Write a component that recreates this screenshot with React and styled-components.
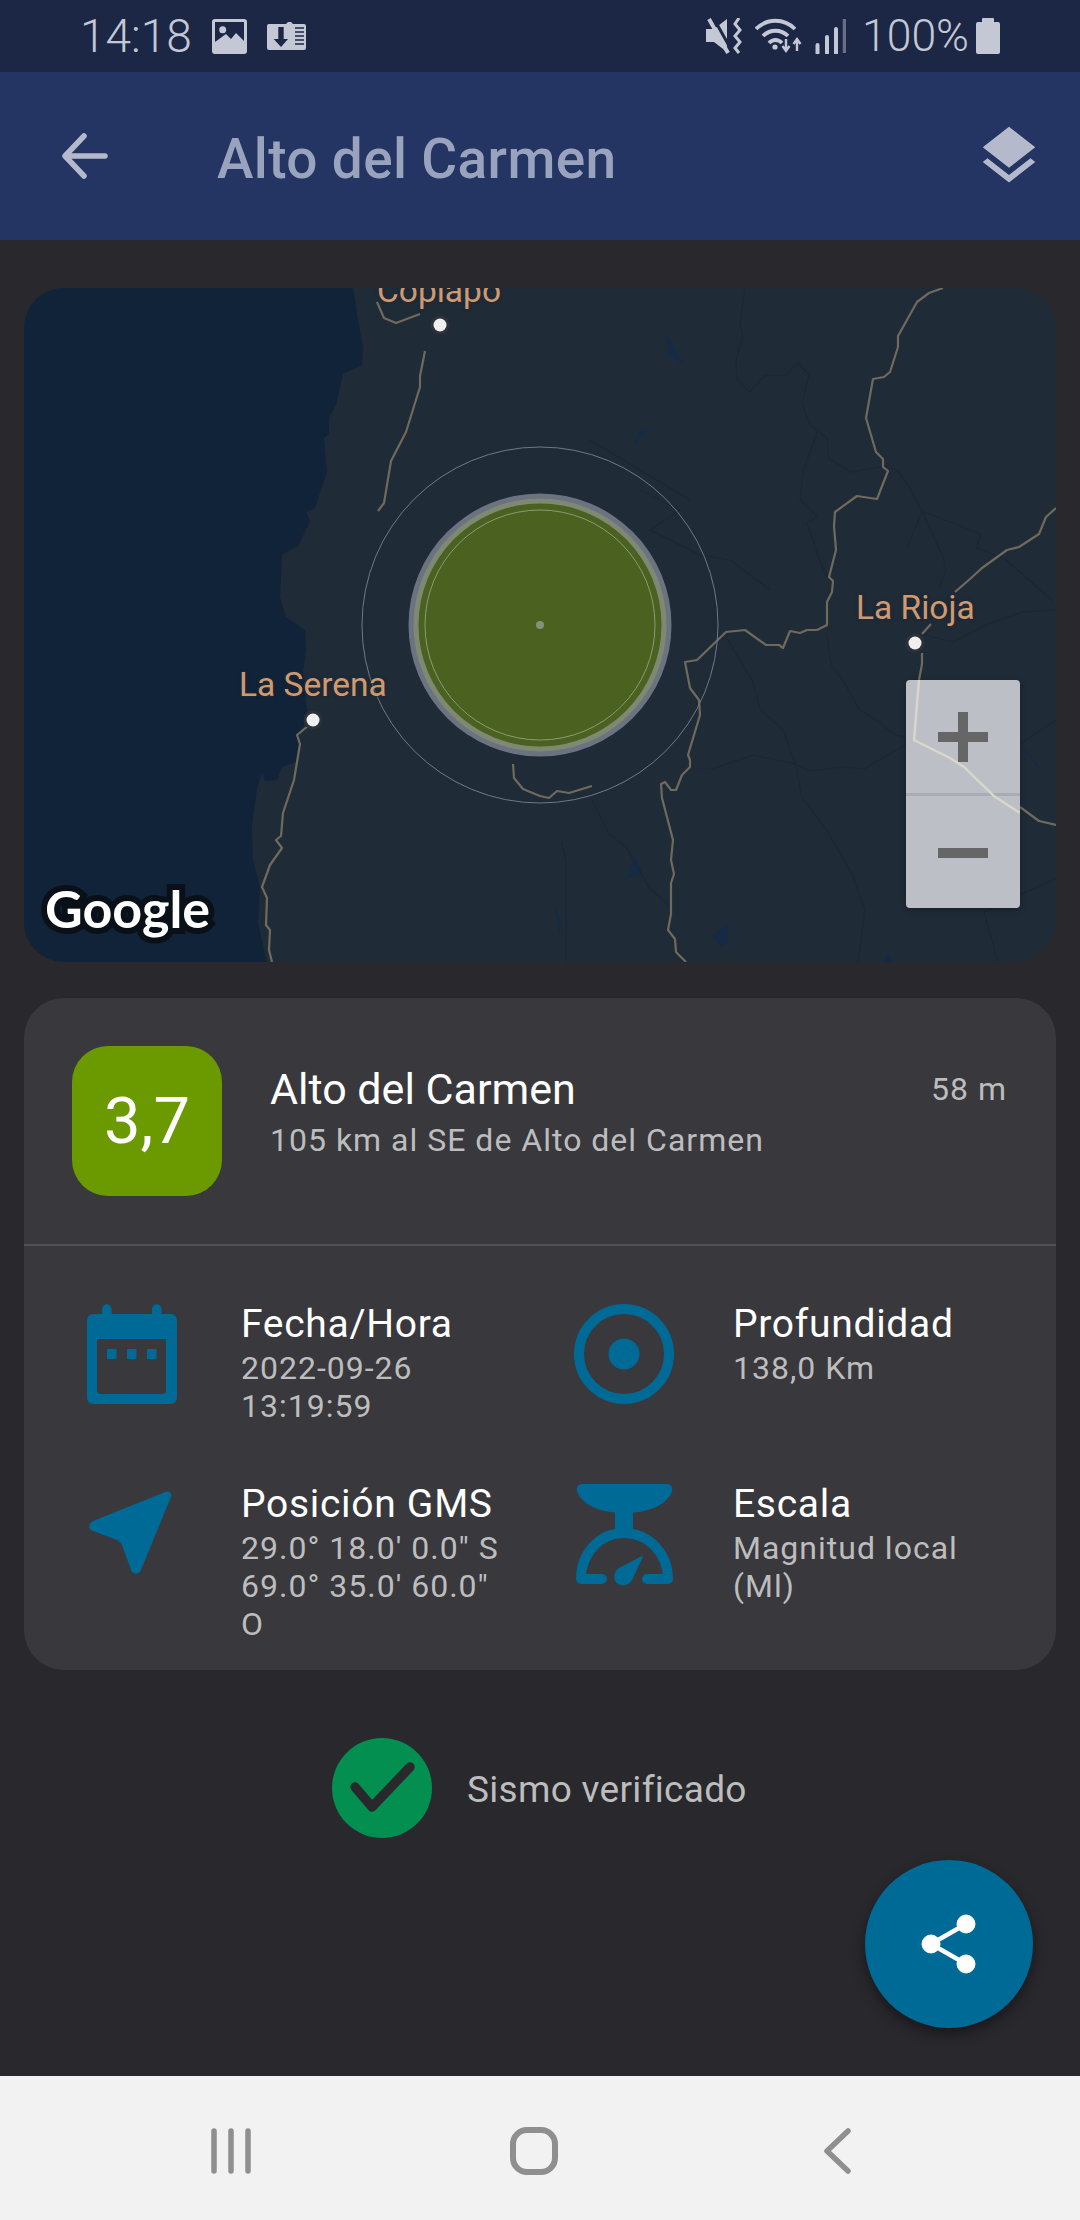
import React from "react";
import styled, { createGlobalStyle } from "styled-components";

const GlobalStyle = createGlobalStyle`
  html, body {
    margin: 0;
    padding: 0;
    background: #28282d;
  }
  * {
    box-sizing: border-box;
  }
`;

const Screen = styled.div`
  width: 1080px;
  height: 2220px;
  display: flex;
  flex-direction: column;
  overflow: hidden;
  font-family: "Roboto", sans-serif;
  background: #28282d;
`;

const StatusBar = styled.div`
  flex: 0 0 72px;
  height: 72px;
  background: #1c2745;
  color: #c4c8d4;
  display: flex;
  align-items: center;
  justify-content: space-between;
  padding: 0 80px 0 80px;
`;

const StatusGroup = styled.div`
  display: flex;
  align-items: center;
`;

const StatusText = styled.span`
  font-size: ${p => p.$size}px;
  font-weight: 300;
  line-height: 72px;
`;

const Glyph = styled.svg`
  display: block;
  flex: none;
  margin: ${p => p.$margin || 0};
`;

const AppBar = styled.header`
  flex: 0 0 168px;
  height: 168px;
  background: #243563;
  display: flex;
  align-items: center;
  padding: 0 36px 0 62px;
`;

const AppTitle = styled.h1`
  flex: 1;
  margin: 5px 0 0 109px;
  font-size: 55px;
  font-weight: 500;
  letter-spacing: 0.35px;
  color: #9aa3bd;
`;

const Content = styled.main`
  flex: 1;
  position: relative;
  padding: 48px 24px 0;
`;

const MapCard = styled.section`
  position: relative;
  height: 674px;
  width: 1032px;
  border-radius: 40px;
  overflow: hidden;
  background: #202b38;
`;

const MapDrawing = styled.svg`
  display: block;
  width: 1032px;
  height: 674px;
`;

const CityLabel = styled.span`
  position: absolute;
  left: ${p => p.$x}px;
  top: ${p => p.$y}px;
  font-size: 33.5px;
  line-height: 38px;
  color: #d09a70;
  white-space: nowrap;
  text-shadow: 0 0 3px #202b38, 0 0 3px #202b38;
`;

const GoogleMark = styled.span`
  position: absolute;
  left: 21px;
  top: 585px;
  font-family: "Lato", sans-serif;
  font-size: 52px;
  font-weight: 700;
  line-height: 70px;
  color: #fff;
  -webkit-text-stroke: 12px #0a1018;
  paint-order: stroke fill;
`;

const ZoomPanel = styled.div`
  position: absolute;
  left: 882px;
  top: 392px;
  width: 114px;
  height: 228px;
  border-radius: 4px;
  background: #bcc0c6;
  box-shadow: 0 2px 6px rgba(0, 0, 0, 0.3);
  display: flex;
  flex-direction: column;
  overflow: hidden;
`;

const ZoomButton = styled.div`
  flex: 1;
  position: relative;
  &:first-child {
    border-bottom: 3px solid #a9adb3;
  }
  &::before {
    content: "";
    position: absolute;
    left: 32px;
    top: 52px;
    width: 50px;
    height: 10px;
    background: #666;
  }
  &::after {
    content: "";
    display: ${p => (p.$minus ? "none" : "block")};
    position: absolute;
    left: 52px;
    top: 32px;
    width: 10px;
    height: 50px;
    background: #666;
  }
`;

const ZoomRoad = styled.svg`
  position: absolute;
  left: 0;
  top: 0;
  width: 114px;
  height: 228px;
`;

const InfoCard = styled.section`
  margin-top: 36px;
  width: 1032px;
  height: 672px;
  border-radius: 40px;
  background: #38383d;
`;

const Summary = styled.div`
  display: flex;
  height: 248px;
  padding: 48px 49px 0 48px;
  border-bottom: 2px solid #505055;
`;

const Badge = styled.div`
  flex: 0 0 150px;
  height: 150px;
  border-radius: 36px;
  background: #6a9a00;
  color: #fff;
  font-size: 65px;
  display: flex;
  align-items: center;
  justify-content: center;
`;

const SummaryText = styled.div`
  flex: 1;
  margin-left: 48px;
  padding-top: 18px;
`;

const PlaceName = styled.div`
  font-size: 43px;
  line-height: 50px;
  color: #fff;
`;

const PlaceSub = styled.div`
  margin-top: 8px;
  font-size: 32px;
  line-height: 36px;
  letter-spacing: 1px;
  color: #bdbdbd;
`;

const Ago = styled.div`
  margin-top: 25px;
  font-size: 32px;
  line-height: 36px;
  letter-spacing: 1px;
  color: #bdbdbd;
`;

const DetailGrid = styled.div`
  display: grid;
  grid-template-columns: 487px 1fr;
  row-gap: 54px;
  padding: 53px 0 0 63px;
`;

const Detail = styled.div`
  display: flex;
  align-items: flex-start;
`;

const DetailIcon = styled.div`
  flex: 0 0 ${p => p.$w}px;
  padding-top: 5px;
`;

const DetailTexts = styled.div`
  width: 268px;
`;

const DetailTitle = styled.div`
  font-size: 39px;
  line-height: 50px;
  letter-spacing: 0.7px;
  color: #fff;
`;

const DetailValue = styled.div`
  font-size: 32px;
  line-height: 38px;
  letter-spacing: 1px;
  color: #bdbdbd;
`;

const Verified = styled.div`
  margin-top: 68px;
  padding-left: 308px;
  display: flex;
  align-items: center;
`;

const VerifiedText = styled.span`
  margin: 2px 0 0 35px;
  font-size: 37px;
  color: #bdbdbd;
  letter-spacing: 0.3px;
`;

const Fab = styled.button`
  position: absolute;
  right: 47px;
  bottom: 48px;
  width: 168px;
  height: 168px;
  border: 0;
  padding: 0;
  border-radius: 50%;
  background: #006a96;
  box-shadow: 0 6px 14px rgba(0, 0, 0, 0.4);
  display: flex;
  align-items: center;
  justify-content: center;
`;

const NavBar = styled.nav`
  flex: 0 0 144px;
  height: 144px;
  background: #f2f2f2;
  display: flex;
  align-items: center;
  padding: 6px 0 0 209px;
`;

const NavSlot = styled.div`
  flex: 0 0 ${p => p.$w}px;
  display: flex;
`;

// map geometry, in screen coordinates; toPoints shifts it to the map card
const toPoints = pts => pts.map(([x, y]) => `${x - 24},${y - 288}`).join(" ");

const SEA = [[24,288],[353,288],[358,320],[363,347],[362,365],[343,374],[336,405],[329,418],[329,434],[324,438],[327,472],[315,508],[306,512],[310,521],[298,546],[282,555],[280,597],[286,617],[305,630],[306,650],[303,673],[308,720],[297,735],[300,744],[296,762],[282,767],[277,780],[265,781],[262,773],[257,789],[252,825],[253,860],[260,887],[258,923],[267,962],[24,962]];

const ROADS = [
  [[377,302],[384,318],[396,323],[420,314]],
  [[425,351],[420,376],[420,387],[406,432],[391,461],[384,503],[378,511]],
  [[308,726],[297,735],[300,744],[294,780],[283,813],[281,836],[276,840],[282,848],[270,865],[262,887],[267,898],[266,925],[270,930],[269,950],[272,962]],
  [[943,288],[929,293],[917,302],[898,336],[898,347],[890,372],[884,377],[873,379],[866,418],[876,452],[883,459],[883,467],[888,471],[877,499],[857,496],[835,512],[834,526],[836,550],[829,577],[833,581],[832,592],[827,602],[827,625],[817,630],[807,630],[800,633],[790,631],[783,648],[779,645],[766,645],[745,630],[726,632],[697,660],[685,662],[690,688],[699,700],[700,715],[688,755],[690,760],[690,767],[682,775],[676,790],[671,790],[665,782],[661,784],[662,798],[673,840],[671,860],[674,874],[671,883],[671,914],[668,930],[675,939],[676,952],[686,962]],
  [[513,764],[514,778],[523,789],[540,796],[549,798],[557,791],[569,793],[592,786]],
  [[931,624],[922,634]],
  [[922,653],[922,664],[919,680]],
  [[1020,807],[1039,821],[1056,825]],
  [[955,592],[970,579],[982,568],[1007,550],[1019,547],[1039,534],[1046,517],[1056,508]]
];

const BORDERS = [
  [[745,288],[740,325],[743,336],[736,360],[737,380],[750,392],[764,376],[786,375],[798,363],[809,375],[802,403],[810,425],[827,438],[829,459],[852,472],[884,466],[898,471],[908,485],[922,511],[943,557],[946,570],[939,588]],
  [[817,432],[803,472],[800,499],[817,517],[807,523],[819,559],[827,577]],
  [[922,511],[907,548]],
  [[922,511],[953,523],[981,534],[977,548],[1005,559],[1053,601]],
  [[922,634],[953,642],[988,624],[1022,612],[1056,610]],
  [[827,633],[831,664],[845,684],[859,709],[879,722],[895,735],[907,737]],
  [[907,744],[864,769],[843,767],[809,771],[795,764],[784,731],[760,709],[753,682],[726,637]],
  [[796,767],[802,798],[826,829],[852,874],[865,909],[858,962]],
  [[691,769],[712,769],[753,755],[795,764]],
  [[592,800],[609,834],[626,847],[650,889],[671,907]],
  [[561,842],[566,860],[566,962]],
  [[1020,744],[1056,720]],
  [[984,912],[1056,878]],
  [[984,912],[998,962]],
  [[640,490],[680,510],[650,530],[700,555],[730,560],[770,590]],
  [[590,440],[640,470],[690,500]]
];

const LAKES = [
  [[666,334],[668,356],[683,363]],
  [[635,854],[628,878],[642,874]],
  [[728,923],[712,936],[722,947],[728,941]],
  [[888,955],[883,962],[893,962]],
  [[554,903],[562,927],[559,932]],
  [[1020,744],[1043,773],[1028,752]],
  [[640,430],[634,444],[650,428]]
];

const CITY_DOTS = [[416,37],[289,432],[891,355]];

const MapArt = () => (
  <MapDrawing viewBox="0 0 1032 674">
    <polygon points={toPoints(SEA)} fill="#112338" />
    {LAKES.map((l, i) => (
      <polygon key={i} points={toPoints(l)} fill="#142a45" />
    ))}
    {BORDERS.map((b, i) => (
      <polyline key={i} points={toPoints(b)} fill="none" stroke="#1c2734" strokeWidth="1.2" />
    ))}
    {ROADS.map((r, i) => (
      <polyline key={i} points={toPoints(r)} fill="none" stroke="#6f6a5c" strokeWidth="2.2" strokeLinejoin="round" />
    ))}
    <circle cx="516" cy="337" r="178" fill="none" stroke="#6f7a86" strokeWidth="1" />
    <circle cx="516" cy="337" r="131.5" fill="#6b7280" />
    <circle cx="516" cy="337" r="126.5" fill="#7f8872" />
    <circle cx="516" cy="337" r="121.5" fill="#4a6120" />
    <circle cx="516" cy="337" r="115" fill="none" stroke="#8a9a78" strokeWidth="1" />
    <circle cx="516" cy="337" r="4" fill="#83907a" />
    {CITY_DOTS.map(([x, y]) => (
      <g key={x}>
        <circle cx={x} cy={y} r="9.5" fill="#2e3238" />
        <circle cx={x} cy={y} r="6.5" fill="#f0f0f0" />
      </g>
    ))}
  </MapDrawing>
);

const ImageIcon = () => (
  <Glyph width="35" height="35" viewBox="0 0 35 35" $margin="0 0 0 20px">
    <rect width="35" height="35" rx="3" fill="#c4c8d4" />
    <rect x="3" y="3" width="29" height="24" fill="#1c2745" />
    <circle cx="10.700" cy="10.700" r="3.500" fill="#c4c8d4" />
    <path d="M3 23l11-8 5 5 5-6 8 8v5H3z" fill="#c4c8d4" />
  </Glyph>
);

const DownloadIcon = () => (
  <Glyph width="39" height="28" viewBox="0 0 39 28" $margin="0 0 0 20px">
    <path d="M0 4a2 2 0 0 1 2-2h17l2-2h3l2 2h11a2 2 0 0 1 2 2v22a2 2 0 0 1-2 2H2a2 2 0 0 1-2-2z" fill="#c4c8d4" />
    <path d="M11.300 5h5.400v12H21l-7 8-7.300-8h4.600z" fill="#1c2745" />
    <path d="M28 6h9M28 10h9M28 14h9M28 18h9M28 22h9" stroke="#1c2745" strokeWidth="1.500" />
  </Glyph>
);

const MuteIcon = () => (
  <Glyph width="37" height="36" viewBox="0 0 37 36" $margin="0 12px 0 0">
    <path d="M0 11h8L21 1v33L8 24H0z" fill="#c4c8d4" />
    <path d="M7 -1l20 36" stroke="#1c2745" strokeWidth="3" />
    <path d="M3 1l19 34" stroke="#c4c8d4" strokeWidth="4" />
    <polyline points="33,0 29,6 34,12 29,18 34,24 29,30 33,35" fill="none" stroke="#c4c8d4" strokeWidth="3" />
  </Glyph>
);

const WifiIcon = () => (
  <Glyph width="48" height="36" viewBox="0 0 48 36" $margin="0 12px 0 0">
    <g fill="none" stroke="#c4c8d4" strokeWidth="3.800">
      <path d="M1 11c11-11 28-11 39 0" />
      <path d="M8 18c7-7 18-7 25 0" />
      <path d="M14 25c4-4 9-4 13 0" />
    </g>
    <circle cx="20" cy="29" r="2.600" fill="#c4c8d4" />
    <path d="M31 21v12M27.500 28l3.500 5 3.500-5" fill="none" stroke="#c4c8d4" strokeWidth="2.400" />
    <path d="M42 33V21M38.500 26l3.500-5 3.500 5" fill="none" stroke="#c4c8d4" strokeWidth="2.400" />
  </Glyph>
);

const SignalIcon = () => (
  <Glyph width="31" height="36" viewBox="0 0 31 36" $margin="0 16px 0 0">
    <path d="M2.500 27v8M12 19v16M21 11v24" stroke="#c4c8d4" strokeWidth="4" strokeLinecap="round" />
    <path d="M29.500 1v34" stroke="#666e88" strokeWidth="3.500" />
  </Glyph>
);

const BatteryIcon = () => (
  <Glyph width="24" height="36" viewBox="0 0 24 36" $margin="0 0 0 7px">
    <path d="M6 1a1 1 0 0 1 1-1h10a1 1 0 0 1 1 1v3h4a2 2 0 0 1 2 2v28a2 2 0 0 1-2 2H2a2 2 0 0 1-2-2V6a2 2 0 0 1 2-2h4z" fill="#c4c8d4" />
  </Glyph>
);

const LayersIcon = () => (
  <Glyph width="70" height="70" viewBox="0 0 24 24" fill="#b4bacb">
    <path d="M11.99 18.54l-7.37-5.73L3 14.07l9 7 9-7-1.63-1.27-7.38 5.74zM12 16l7.36-5.73L21 9l-9-7-9 7 1.63 1.27L12 16z" />
  </Glyph>
);

const BackArrow = () => (
  <Glyph width="46" height="46" viewBox="0 0 46 46" fill="none" stroke="#b4bacb" strokeWidth="5.500" strokeLinecap="round" strokeLinejoin="round">
    <path d="M43 23H4M22 3L3 23l19 20" />
  </Glyph>
);

const CalendarIcon = () => (
  <Glyph width="90" height="100" viewBox="0 0 90 100">
    <path d="M6 10h9V5a4.750 4.750 0 0 1 9.500 0v5h40.500V5a4.750 4.750 0 0 1 9.500 0v5H84a6 6 0 0 1 6 6v78a6 6 0 0 1-6 6H6a6 6 0 0 1-6-6V16a6 6 0 0 1 6-6z" fill="#006a96" />
    <path d="M10 35h69v51a4 4 0 0 1-4 4H14a4 4 0 0 1-4-4z" fill="#38383d" />
    <rect x="20" y="45" width="9.500" height="10" fill="#006a96" />
    <rect x="40" y="45" width="9.500" height="10" fill="#006a96" />
    <rect x="60" y="45" width="9.500" height="10" fill="#006a96" />
  </Glyph>
);

const DepthIcon = () => (
  <Glyph width="100" height="100" viewBox="0 0 100 100" fill="none">
    <circle cx="50" cy="50" r="45" stroke="#006a96" strokeWidth="10" />
    <circle cx="50" cy="50" r="15.500" fill="#006a96" />
  </Glyph>
);

const NavigationIcon = () => (
  <Glyph width="84" height="84" viewBox="0 0 84 84" $margin="7px 0 0 2px">
    <path d="M75 1.500L4 30c-5 3-5 8 0 10l24 9c2 1 4 3 5 5l9 25c2 5 8 5 10 0L82 6c2-4-3-7-7-4.500z" fill="#006a96" />
  </Glyph>
);

const ScaleIcon = () => (
  <Glyph width="100" height="102" viewBox="0 0 100 102" $margin="0 0 0 1px">
    <path d="M8 0h83c5 0 7 3 6 7C93 20 75 29 49.500 29 24 29 6 20 2 7 1 3 3 0 8 0z" fill="#006a96" />
    <rect x="40" y="27" width="18" height="24" fill="#006a96" />
    <path d="M27 95H6C6 70 24 49 49 49s44 21 44 46H72" fill="none" stroke="#006a96" strokeWidth="10" strokeLinecap="round" strokeLinejoin="round" />
    <path d="M66.700 72c1.300 0 1.300 1 .8 2L58 94c-2 6-8 8-12 7-6-1-8-7-6-12 1-3 3-5 6-6z" fill="#006a96" />
  </Glyph>
);

const CheckIcon = () => (
  <Glyph width="100" height="100" viewBox="0 0 100 100">
    <circle cx="50" cy="50" r="50" fill="#028f4f" />
    <path d="M23 49l17 20 38-40" fill="none" stroke="#28282d" strokeWidth="9.500" strokeLinecap="round" strokeLinejoin="round" />
  </Glyph>
);

const ShareIcon = () => (
  <Glyph width="56" height="62" viewBox="0 0 56 62" fill="#fff" stroke="#fff">
    <circle cx="45" cy="11" r="9" />
    <circle cx="10" cy="31" r="9" />
    <circle cx="45" cy="51" r="9" />
    <path d="M10 31L45 11M10 31l35 20" strokeWidth="4.500" fill="none" />
  </Glyph>
);

const RecentsIcon = () => (
  <Glyph width="44" height="46" viewBox="0 0 44 46">
    <path d="M5 3v40M22 3v40M39 3v40" stroke="#8f8f8f" strokeWidth="5.500" strokeLinecap="round" />
  </Glyph>
);

const HomeIcon = () => (
  <Glyph width="48" height="48" viewBox="0 0 48 48">
    <rect x="3" y="3" width="42" height="42" rx="14" fill="none" stroke="#8f8f8f" strokeWidth="6" />
  </Glyph>
);

const NavBackIcon = () => (
  <Glyph width="28" height="46" viewBox="0 0 28 46" fill="none" stroke="#8f8f8f" strokeWidth="5.500" strokeLinecap="round" strokeLinejoin="round">
    <path d="M25 3L4 23l21 20" />
  </Glyph>
);

const DETAILS = [
  { icon: <CalendarIcon />, w: 154, title: "Fecha/Hora", value: "2022-09-26 13:19:59" },
  { icon: <DepthIcon />, w: 159, title: "Profundidad", value: "138,0 Km" },
  { icon: <NavigationIcon />, w: 154, title: "Posición GMS", value: "29.0° 18.0' 0.0\" S 69.0° 35.0' 60.0\" O" },
  { icon: <ScaleIcon />, w: 159, title: "Escala", value: "Magnitud local (Ml)" }
];

const App = () => (
  <Screen>
    <GlobalStyle />
    <StatusBar>
      <StatusGroup>
        <StatusText $size={46}>14:18</StatusText>
        <ImageIcon />
        <DownloadIcon />
      </StatusGroup>
      <StatusGroup>
        <MuteIcon />
        <WifiIcon />
        <SignalIcon />
        <StatusText $size={44.5}>100%</StatusText>
        <BatteryIcon />
      </StatusGroup>
    </StatusBar>
    <AppBar>
      <BackArrow />
      <AppTitle>Alto del Carmen</AppTitle>
      <LayersIcon />
    </AppBar>
    <Content>
      <MapCard>
        <MapArt />
        <CityLabel $x={353} $y={-16}>Copiapó</CityLabel>
        <CityLabel $x={215} $y={378}>La Serena</CityLabel>
        <CityLabel $x={832} $y={301}>La Rioja</CityLabel>
        <GoogleMark>Google</GoogleMark>
        <ZoomPanel>
          <ZoomButton />
          <ZoomButton $minus />
          <ZoomRoad viewBox="0 0 114 228">
            <polyline points="13,0 8,60 44,78 58,87 88,116 114,133" fill="none" stroke="#d9d7ca" strokeWidth="2.400" />
          </ZoomRoad>
        </ZoomPanel>
      </MapCard>
      <InfoCard>
        <Summary>
          <Badge>3,7</Badge>
          <SummaryText>
            <PlaceName>Alto del Carmen</PlaceName>
            <PlaceSub>105 km al SE de Alto del Carmen</PlaceSub>
          </SummaryText>
          <Ago>58 m</Ago>
        </Summary>
        <DetailGrid>
          {DETAILS.map(d => (
            <Detail key={d.title}>
              <DetailIcon $w={d.w}>{d.icon}</DetailIcon>
              <DetailTexts>
                <DetailTitle>{d.title}</DetailTitle>
                <DetailValue>{d.value}</DetailValue>
              </DetailTexts>
            </Detail>
          ))}
        </DetailGrid>
      </InfoCard>
      <Verified>
        <CheckIcon />
        <VerifiedText>Sismo verificado</VerifiedText>
      </Verified>
      <Fab>
        <ShareIcon />
      </Fab>
    </Content>
    <NavBar>
      <NavSlot $w={301}><RecentsIcon /></NavSlot>
      <NavSlot $w={313}><HomeIcon /></NavSlot>
      <NavSlot $w={40}><NavBackIcon /></NavSlot>
    </NavBar>
  </Screen>
);

export default App;
